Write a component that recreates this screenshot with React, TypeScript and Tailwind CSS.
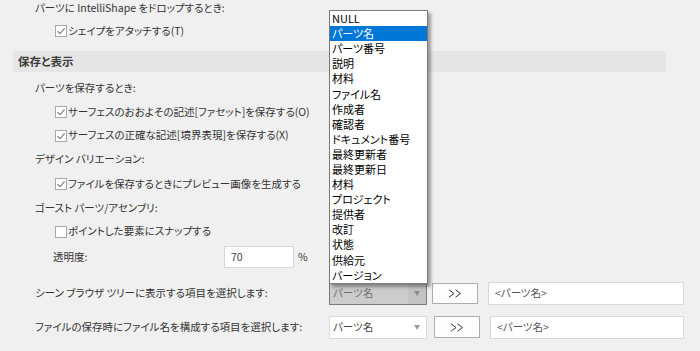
import React from "react";

const FONT = "[font-family:'Noto_Sans_CJK_JP','Noto_Sans',sans-serif] [font-feature-settings:'palt']";

function Check({ checked }: { checked: boolean }) {
  return (
    <span className="w-[12px] h-[12px] border border-[#a8a8a8] bg-white flex items-center justify-center shrink-0">
      {checked && (
        <svg width="10" height="10" viewBox="0 0 10 10">
          <path d="M1.5 5.2 L4 7.6 L8.6 2.4" fill="none" stroke="#8a8a8a" strokeWidth="1.4" />
        </svg>
      )}
    </span>
  );
}

function CheckRow({ checked, label, h }: { checked: boolean; label: string; h: string }) {
  return (
    <div className={`flex items-center pl-[55px] ${h}`}>
      <Check checked={checked} />
      <span className="ml-[1px]">{label}</span>
    </div>
  );
}

function Label({ text, h }: { text: string; h: string }) {
  return <div className={`flex items-center pl-[35px] ${h}`}>{text}</div>;
}

function Chevrons() {
  return (
    <svg width="14" height="9" viewBox="0 0 14 9">
      <path d="M1 0.8 L6 4.5 L1 8.2 M7.5 0.8 L12.5 4.5 L7.5 8.2" fill="none" stroke="#333" strokeWidth="1" />
    </svg>
  );
}

const items = [
  "NULL",
  "パーツ名",
  "パーツ番号",
  "説明",
  "材料",
  "ファイル名",
  "作成者",
  "確認者",
  "ドキュメント番号",
  "最終更新者",
  "最終更新日",
  "材料",
  "プロジェクト",
  "提供者",
  "改訂",
  "状態",
  "供給元",
  "バージョン",
];

export default function App() {
  return (
    <div className={`relative w-[700px] h-[351px] overflow-hidden bg-[#f0f0f0] text-[10.5px] leading-none text-[#333] ${FONT}`}>
      <div className="flex flex-col">
        <Label text="パーツに IntelliShape をドロップするとき:" h="h-[16px]" />
        <CheckRow checked label="シェイプをアタッチする(T)" h="h-[30px]" />
        <div className="mt-[5px] ml-[13px] w-[653px] h-[21px] bg-[#e6e6e6] flex items-center pl-[5px] text-[11.5px] font-bold text-[#3c3c3c]">
          保存と表示
        </div>
        <div className="h-[4px]" />
        <Label text="パーツを保存するとき:" h="h-[24px]" />
        <CheckRow checked label="サーフェスのおおよその記述[ファセット]を保存する(O)" h="h-[24px]" />
        <CheckRow checked label="サーフェスの正確な記述[境界表現]を保存する(X)" h="h-[23px]" />
        <Label text="デザイン バリエーション:" h="h-[25px]" />
        <CheckRow checked label="ファイルを保存するときにプレビュー画像を生成する" h="h-[24px]" />
        <Label text="ゴースト パーツ/アセンブリ:" h="h-[25px]" />
        <CheckRow checked={false} label="ポイントした要素にスナップする" h="h-[21px]" />
        <div className="flex items-center h-[30px]">
          <span className="pl-[53px] w-[224px]">透明度:</span>
          <div className="w-[70px] h-[22px] bg-white border border-[#d6d6d6] flex items-center pl-[6px] text-[#444]">70</div>
          <span className="ml-[4px]">%</span>
        </div>
        <div className="flex items-center h-[42px]">
          <span className="pl-[35px] w-[329px]">シーン ブラウザ ツリーに表示する項目を選択します:</span>
          <div className="w-[98px] h-[23px] bg-[#cccccc] border border-[#7a7a7a] flex items-stretch">
            <span className="flex-1 flex items-center pl-[3px] text-[#6e6e6e]">パーツ名</span>
            <span className="w-[18px] bg-[#c3c3c3] flex items-center justify-center text-[#8a8a8a] text-[6px]">▼</span>
          </div>
          <div className="ml-[5px] w-[46px] h-[21px] bg-[#fdfdfd] border border-[#adadad] flex items-center justify-center">
            <Chevrons />
          </div>
          <div className="ml-[10px] w-[196px] h-[23px] bg-white border border-[#d9d9d9] flex items-center pl-[6px] text-[#555]">
            &lt;パーツ名&gt;
          </div>
        </div>
        <div className="flex items-center h-[26px]">
          <span className="pl-[35px] w-[329px]">ファイルの保存時にファイル名を構成する項目を選択します:</span>
          <div className="w-[98px] h-[23px] bg-white border border-[#d9d9d9] flex items-stretch">
            <span className="flex-1 flex items-center pl-[3px] text-[#444]">パーツ名</span>
            <span className="w-[18px] flex items-center justify-center text-[#999] text-[6px]">▼</span>
          </div>
          <div className="ml-[7px] w-[46px] h-[22px] bg-[#fdfdfd] border border-[#adadad] flex items-center justify-center">
            <Chevrons />
          </div>
          <div className="ml-[10px] w-[194px] h-[23px] bg-white border border-[#d9d9d9] flex items-center pl-[6px] text-[#555]">
            &lt;パーツ名&gt;
          </div>
        </div>
      </div>

      <div className="absolute left-[329px] top-[10px] w-[99px] bg-white border border-[#7a7a7a] shadow-[3px_3px_3px_rgba(0,0,0,0.35)] text-[11px] text-black">
        {items.map((t, i) => (
          <div
            key={i}
            className={
              i === 1
                ? "h-[15.1px] flex items-center pl-[2px] bg-[#0078d7] text-white"
                : "h-[15.1px] flex items-center pl-[2px]"
            }
          >
            {t}
          </div>
        ))}
      </div>
    </div>
  );
}
